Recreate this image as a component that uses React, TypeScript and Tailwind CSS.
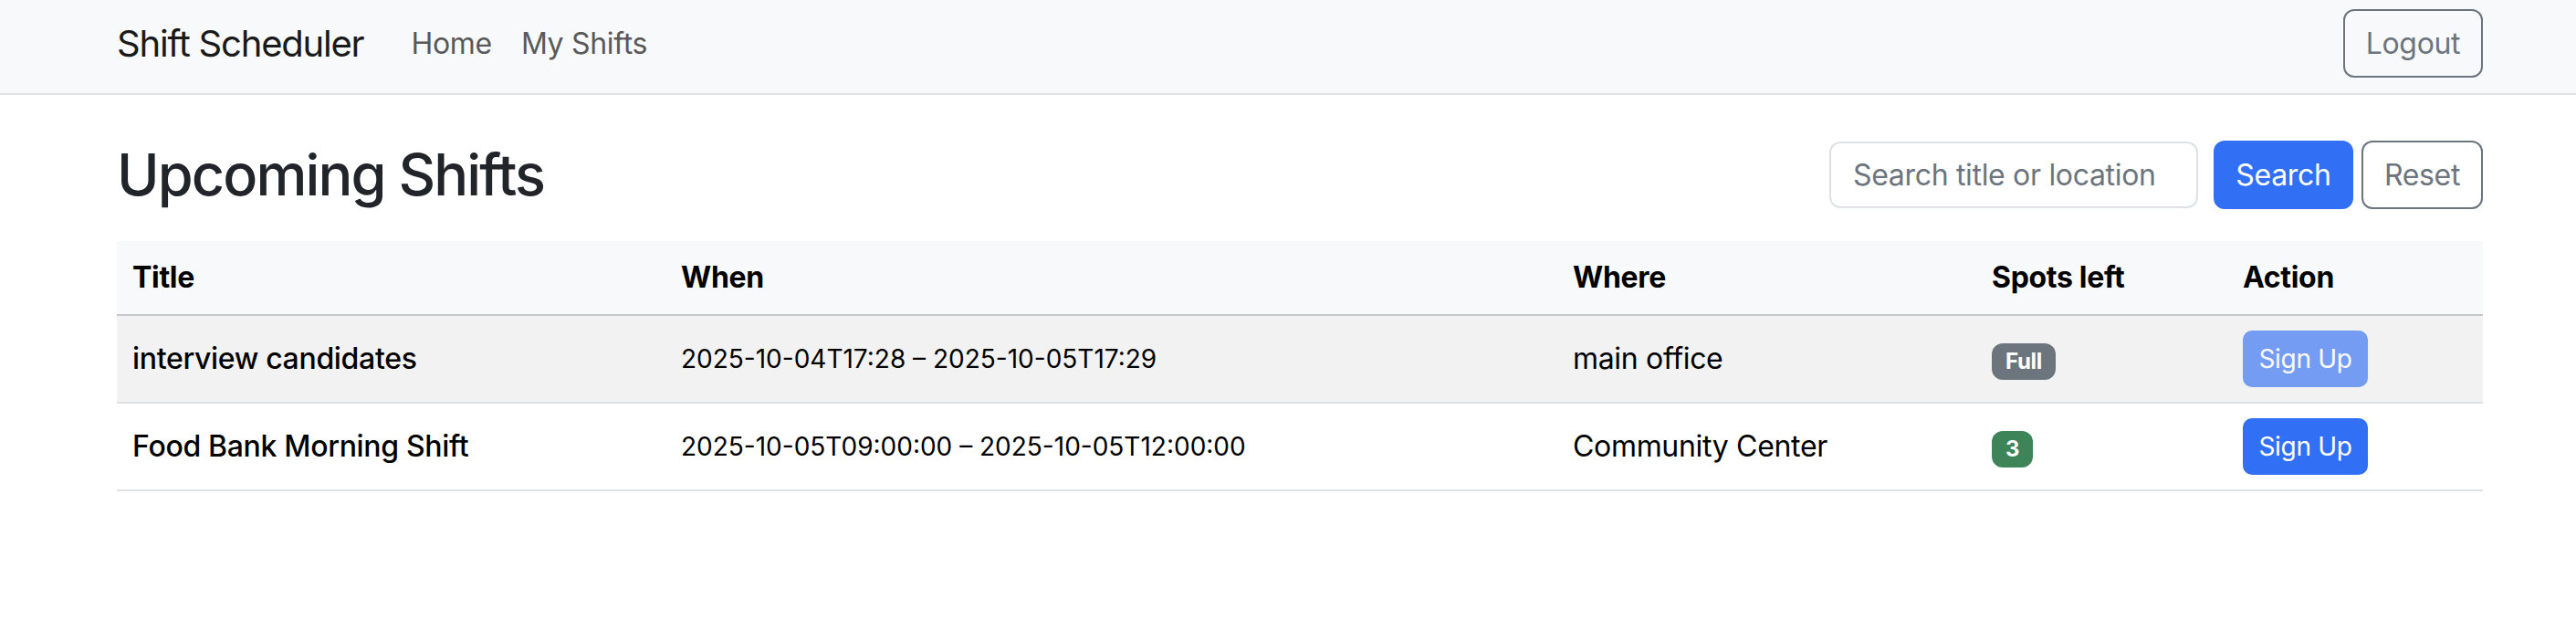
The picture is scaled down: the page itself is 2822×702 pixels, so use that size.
import React from "react";

type Shift = {
  title: string;
  when: string;
  where: string;
  spots: number;
};

const shifts: Shift[] = [
  {
    title: "interview candidates",
    when: "2025-10-04T17:28 – 2025-10-05T17:29",
    where: "main office",
    spots: 0,
  },
  {
    title: "Food Bank Morning Shift",
    when: "2025-10-05T09:00:00 – 2025-10-05T12:00:00",
    where: "Community Center",
    spots: 3,
  },
];

const App = () => {
  return (
    <div className="min-h-screen bg-white font-['Inter','Liberation_Sans',sans-serif] text-[#212529] tracking-[-0.02em]">
      {/* Navbar */}
      <nav className="bg-[#f8f9fa] border-b-2 border-[#dee2e6]">
        <div className="w-[2592px] ml-[128px] flex items-center justify-between pt-[10px] pb-[17px]">
          <div className="flex items-center">
            <span className="text-[40px] leading-[60px] text-[#1a1a1a] mr-[36px] tracking-[-0.03em]">Shift Scheduler</span>
            <a className="text-[32px] leading-[48px] text-[#595959] px-[16px]">Home</a>
            <a className="text-[32px] leading-[48px] text-[#595959] px-[16px]">My Shifts</a>
          </div>
          <button className="h-[75px] w-[153px] text-[32px] leading-[48px] text-[#6c757d] border-2 border-[#6c757d] rounded-[12px]">
            Logout
          </button>
        </div>
      </nav>

      {/* Main */}
      <main className="w-[2592px] ml-[128px] mt-[49px]">
        <div className="flex items-center justify-between mb-[34px]">
          <h2 className="text-[63px] leading-[77px] font-medium text-[#212529] tracking-[-0.03em]">Upcoming Shifts</h2>
          <div className="flex items-center">
            <input
              className="w-[404px] h-[73px] px-[24px] text-[32px] border-2 border-[#dee2e6] rounded-[12px] placeholder:text-[#6c757d] outline-none"
              placeholder="Search title or location"
            />
            <button className="ml-[17px] w-[153px] h-[75px] text-[32px] text-white bg-[#316ff5] border-2 border-[#316ff5] rounded-[12px]">
              Search
            </button>
            <button className="ml-[9px] w-[133px] h-[75px] text-[32px] text-[#6c757d] border-2 border-[#6c757d] rounded-[12px]">
              Reset
            </button>
          </div>
        </div>

        <table className="w-full table-fixed border-collapse text-[32px] text-black">
          <colgroup>
            <col className="w-[601px]" />
            <col className="w-[977px]" />
            <col className="w-[459px]" />
            <col className="w-[275px]" />
            <col className="w-[280px]" />
          </colgroup>
          <thead>
            <tr className="bg-[#f8f9fa] border-b-2 border-[#c6c7c8]">
              <th className="text-left font-bold px-[17px] py-[16px] leading-[48px]">Title</th>
              <th className="text-left font-bold px-[17px] py-[16px] leading-[48px]">When</th>
              <th className="text-left font-bold px-[17px] py-[16px] leading-[48px]">Where</th>
              <th className="text-left font-bold px-[17px] py-[16px] leading-[48px]">Spots left</th>
              <th className="text-left font-bold px-[17px] py-[16px] leading-[48px]">Action</th>
            </tr>
          </thead>
          <tbody>
            {shifts.map((s, idx) => (
              <tr
                key={idx}
                className={`border-b-2 border-[#dee2e6] ${idx === 0 ? "bg-[#f2f2f2]" : "bg-white"}`}
              >
                <td className="px-[17px] py-[16px] align-middle font-medium leading-[48px]">{s.title}</td>
                <td className="px-[17px] py-[16px] align-middle text-[28px] leading-[42px] tracking-normal">{s.when}</td>
                <td className="px-[17px] py-[16px] align-middle leading-[48px]">{s.where}</td>
                <td className="px-[17px] py-[16px] align-middle">
                  {s.spots === 0 ? (
                    <span className="inline-block px-[15px] py-[8px] text-[24px] leading-[24px] font-bold text-white bg-[#6c757d] rounded-[12px]">
                      Full
                    </span>
                  ) : (
                    <span className="inline-block px-[15px] py-[8px] text-[24px] leading-[24px] font-bold text-white bg-[#3e8459] rounded-[12px]">
                      {s.spots}
                    </span>
                  )}
                </td>
                <td className="px-[17px] py-[16px] align-middle">
                  <button
                    className={`h-[62px] w-[137px] text-[28px] leading-[42px] text-white bg-[#316ff5] border-2 border-[#316ff5] rounded-[10px] ${
                      s.spots === 0 ? "opacity-65" : ""
                    }`}
                  >
                    Sign Up
                  </button>
                </td>
              </tr>
            ))}
          </tbody>
        </table>
      </main>
    </div>
  );
};

export default App;
